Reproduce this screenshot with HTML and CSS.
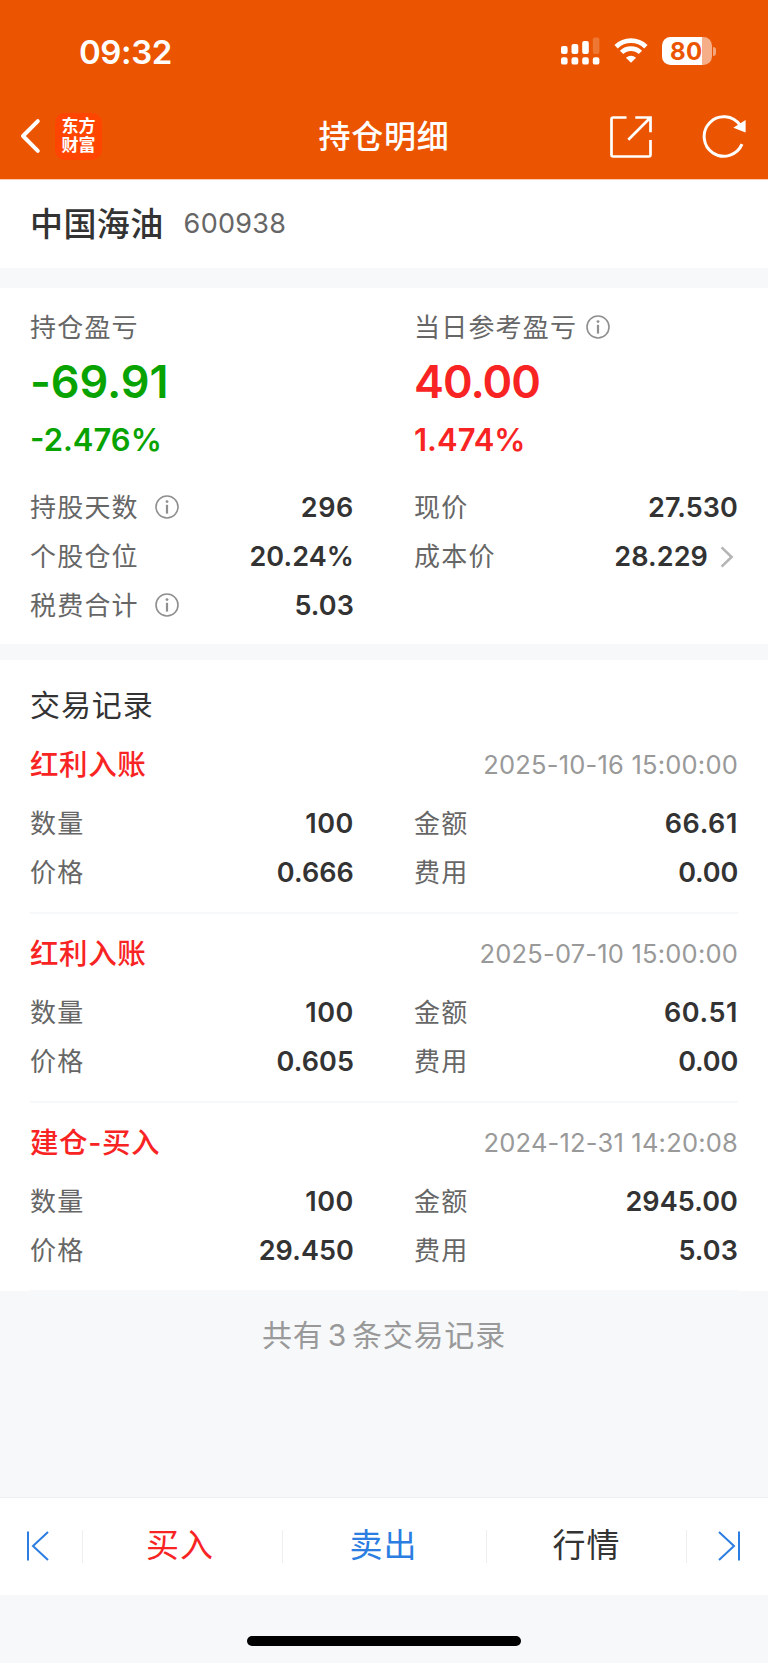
FILE: index.html
```
<!DOCTYPE html>
<html lang="zh-CN">
<head>
<meta charset="utf-8">
<title>持仓明细</title>
<link rel="stylesheet" href="styles.css">
</head>
<body>
<svg class="defs" width="0" height="0" aria-hidden="true">
  <symbol id="info" viewBox="0 0 24 24">
    <circle cx="12" cy="12" r="11" fill="none" stroke="#8f8f8f" stroke-width="1.6"/>
    <circle cx="12" cy="6.6" r="1.4" fill="#8f8f8f"/>
    <path d="M12 9.8V18.6" stroke="#8f8f8f" stroke-width="2.2"/>
  </symbol>
</svg>
<header class="header">
  <div class="status">
    <span class="time">09:32</span>
    <div class="indicators">
      <svg class="signal" width="39" height="28" viewBox="0 0 39 28" fill="#fff">
        <rect x="0" y="9" width="6.6" height="8" rx="2"/>
        <rect x="10.5" y="7" width="6.8" height="10" rx="2"/>
        <rect x="21.2" y="4" width="6.6" height="13" rx="2"/>
        <rect x="31.8" y="0.5" width="6.6" height="16.5" rx="2" opacity=".2"/>
        <rect x="0" y="20.2" width="6.6" height="7.4" rx="2.2"/>
        <rect x="10.5" y="20.2" width="6.8" height="7.4" rx="2.2"/>
        <rect x="21.2" y="20.2" width="6.6" height="7.4" rx="2.2"/>
        <rect x="31.8" y="20.2" width="6.6" height="7.4" rx="2.2"/>
      </svg>
      <svg class="wifi" width="34" height="26" viewBox="0 0 34 26" fill="none" stroke="#fff" stroke-width="4.8">
        <path d="M2.1 8.7A21.5 21.5 0 0 1 31.9 8.7"/>
        <path d="M7.6 14.4A13.5 13.5 0 0 1 26.4 14.4"/>
        <path d="M17 24.8L11.9 19.7Q17 15.6 22.1 19.7Z" fill="#fff" stroke="none"/>
      </svg>
      <div class="battery"><span class="level">80</span></div>
      <span class="nub"></span>
    </div>
  </div>
  <nav class="nav">
    <div class="side">
      <svg class="back" width="22" height="36" viewBox="0 0 22 36" fill="none" stroke="#fff" stroke-width="4" stroke-linecap="round" stroke-linejoin="round"><path d="M18.8 3.2L4 18L18.8 32.8"/></svg>
      <div class="logo"><span>东方</span><span>财富</span></div>
    </div>
    <h1 class="title">持仓明细</h1>
    <div class="side side-end">
      <svg class="share" width="42" height="42" viewBox="0 0 42 42" fill="none" stroke="#fff" stroke-width="2.7">
        <path d="M16.5 1.5H3.2Q1.5 1.5 1.5 3.2V38.8Q1.5 40.5 3.2 40.5H38.8Q40.5 40.5 40.5 38.8V24"/>
        <path d="M25.3 1.5H40.5V16.3M40 2L18.3 23.8"/>
      </svg>
      <svg class="refresh" width="44" height="44" viewBox="0 0 44 44" fill="none" stroke="#fff" stroke-width="3">
        <path d="M40 30.2A19.7 19.7 0 1 1 38 11.2"/>
        <path d="M43.6 6V18.6L31.3 13.8Z" fill="#fff" stroke="none"/>
      </svg>
    </div>
  </nav>
</header>

<section class="stock"><span class="stock-name">中国海油</span><span class="stock-code">600938</span></section>

<section class="summary">
  <div class="cols">
    <div class="pnl down">
      <div class="label">持仓盈亏</div>
      <div class="amount">-69.91</div>
      <div class="percent">-2.476%</div>
    </div>
    <div class="pnl up">
      <div class="label">当日参考盈亏<svg class="info near"><use href="#info"/></svg></div>
      <div class="amount tight">40.00</div>
      <div class="percent">1.474%</div>
    </div>
  </div>
  <div class="cols facts">
    <div class="row"><span class="label">持股天数<svg class="info"><use href="#info"/></svg></span><b class="loose">296</b></div>
    <div class="row"><span class="label">现价</span><b>27.530</b></div>
    <div class="row"><span class="label">个股仓位</span><b>20.24%</b></div>
    <div class="row"><span class="label">成本价</span><b>28.229<svg class="more" width="14" height="22" viewBox="0 0 14 22" fill="none" stroke="#b5b5b5" stroke-width="2.6"><path d="M1.6 1.4L11.6 11L1.6 20.6"/></svg></b></div>
    <div class="row"><span class="label">税费合计<svg class="info"><use href="#info"/></svg></span><b>5.03</b></div>
  </div>
</section>

<section class="records">
  <h2 class="records-title">交易记录</h2>
  <article class="record">
    <div class="record-head"><span class="kind">红利入账</span><time>2025-10-16 15:00:00</time></div>
    <div class="cols">
      <div class="row"><span class="label">数量</span><b class="loose">100</b></div>
      <div class="row"><span class="label">金额</span><b class="loose">66.61</b></div>
      <div class="row"><span class="label">价格</span><b>0.666</b></div>
      <div class="row"><span class="label">费用</span><b class="snug">0.00</b></div>
    </div>
  </article>
  <article class="record">
    <div class="record-head"><span class="kind">红利入账</span><time>2025-07-10 15:00:00</time></div>
    <div class="cols">
      <div class="row"><span class="label">数量</span><b class="loose">100</b></div>
      <div class="row"><span class="label">金额</span><b class="loose">60.51</b></div>
      <div class="row"><span class="label">价格</span><b>0.605</b></div>
      <div class="row"><span class="label">费用</span><b class="snug">0.00</b></div>
    </div>
  </article>
  <article class="record">
    <div class="record-head"><span class="kind">建仓-买入</span><time>2024-12-31 14:20:08</time></div>
    <div class="cols">
      <div class="row"><span class="label">数量</span><b class="loose">100</b></div>
      <div class="row"><span class="label">金额</span><b>2945.00</b></div>
      <div class="row"><span class="label">价格</span><b>29.450</b></div>
      <div class="row"><span class="label">费用</span><b>5.03</b></div>
    </div>
  </article>
</section>

<p class="total">共有<span class="count">3</span>条交易记录</p>

<footer class="actions">
  <div class="action edge"><svg width="24" height="32" viewBox="0 0 24 32" fill="none" stroke="#2b7de1" stroke-width="2"><path d="M2 1.5V30.5M22 2L7 16L22 30"/></svg></div>
  <div class="action buy"><span>买入</span></div>
  <div class="action sell"><span>卖出</span></div>
  <div class="action"><span>行情</span></div>
  <div class="action edge"><svg width="24" height="32" viewBox="0 0 24 32" fill="none" stroke="#2b7de1" stroke-width="2"><path d="M22 1.5V30.5M2 2L17 16L2 30"/></svg></div>
</footer>
<div class="home"><span></span></div>
</body>
</html>
```
FILE: styles.css
```
* { box-sizing: border-box; }
body {
  margin: 0;
  width: 768px;
  height: 1663px;
  display: flex;
  flex-direction: column;
  overflow: hidden;
  background: #f6f8fa;
  color: #333;
  font-family: Inter, "Noto Sans CJK SC", sans-serif;
}
h1, h2, p { margin: 0; font-weight: 400; }
svg { display: block; flex: none; }
.defs { position: absolute; }

.header {
  height: 180px;
  background: #eb5502;
  border-bottom: 1px solid #f9c8ab;
  color: #fff;
}
.status {
  height: 102px;
  padding: 0 52px 0 79px;
  display: flex;
  align-items: center;
  justify-content: space-between;
}
.time { font-size: 33px; font-weight: 600; letter-spacing: -.4px; line-height: 40px; padding-top: 1px; }
.indicators { display: flex; align-items: center; }
.wifi { margin: 0 14px; }
.battery {
  width: 50px;
  height: 28px;
  border-radius: 8.5px;
  background: linear-gradient(to right, #fff 40px, #f6ae88 40px);
  display: flex;
  align-items: center;
  padding-left: 8px;
}
.level { font-size: 24px; font-weight: 700; letter-spacing: .3px; line-height: 26px; padding-top: 2px; color: #eb5502; }
.nub { width: 3px; height: 9px; margin-left: 1px; border-radius: 0 4px 4px 0; background: #f5a57c; }

.nav {
  height: 68px;
  display: flex;
  align-items: center;
  justify-content: space-between;
  padding: 0 22px 0 19px;
}
.side { width: 150px; display: flex; align-items: center; }
.side-end { width: 147px; justify-content: flex-end; }
.logo {
  width: 47px;
  height: 47px;
  margin-left: 14px;
  border-radius: 10px;
  background: #ff4500;
  display: flex;
  flex-direction: column;
  align-items: center;
  justify-content: center;
}
.logo span { font-size: 17px; font-weight: 700; line-height: 19.5px; }
.title { font-size: 32px; font-weight: 500; letter-spacing: .8px; line-height: 44px; padding-top: 2px; }
.share { margin-top: 1px; }
.refresh { margin-left: 50px; }

.stock {
  height: 88px;
  padding: 0 0 1px 30px;
  display: flex;
  align-items: center;
  background: #fff;
}
.stock-name { font-size: 33px; font-weight: 500; letter-spacing: .4px; line-height: 44px; }
.stock-code { margin-left: 20px; font-size: 27px; letter-spacing: .3px; line-height: 44px; color: #666; }

.cols { display: grid; grid-template-columns: 324px 324px; column-gap: 60px; }
.label {
  display: flex;
  align-items: center;
  font-size: 26px;
  letter-spacing: 1.2px;
  line-height: 49px;
  color: #666;
}
.info { width: 24px; height: 24px; margin: -1px 0 0 16px; }
.info.near { margin-left: 9px; }

.summary {
  height: 356px;
  margin-top: 20px;
  padding: 15px 30px 0;
  background: #fff;
}
.pnl .amount { font-size: 45px; font-weight: 600; letter-spacing: -.1px; line-height: 60px; }
.pnl .amount.tight { letter-spacing: -1px; }
.pnl .percent { font-size: 31px; font-weight: 600; line-height: 55px; }
.down .amount, .down .percent { color: #08a300; }
.up .amount, .up .percent { color: #f82424; }
.facts { margin-top: 16px; }
.row { height: 49px; display: flex; align-items: center; justify-content: space-between; }
.row b { display: flex; align-items: center; font-size: 27px; font-weight: 600; letter-spacing: .1px; line-height: 49px; }
.row b.loose { letter-spacing: .6px; }
.row b.snug { letter-spacing: -.2px; }
.more { margin: 0 4px 0 12px; }

.records { height: 631px; margin-top: 16px; padding: 23px 30px 0; background: #fff; }
.records-title { font-size: 30px; letter-spacing: .9px; line-height: 44px; }
.record { height: 189px; border-bottom: 2px solid #f7f8f9; padding-top: 21px; }
.records-title + .record { height: 187px; padding-top: 19px; }
.record-head { height: 38px; margin-bottom: 15px; display: flex; align-items: center; justify-content: space-between; }
.kind { font-size: 28.5px; font-weight: 500; letter-spacing: .6px; color: #f82424; line-height: 38px; }
.record time { font-size: 25.5px; letter-spacing: .2px; color: #999; line-height: 38px; }

.total { margin-top: 22px; text-align: center; font-size: 30px; letter-spacing: .8px; line-height: 44px; color: #999; }
.count { margin: 0 5px 0 4px; }

.actions {
  height: 98px;
  margin-top: auto;
  display: grid;
  grid-template-columns: 82px 200px 204px 200px 82px;
  align-items: center;
  background: #fff;
  border-top: 1px solid #eeeff0;
}
.action {
  height: 33px;
  display: flex;
  align-items: center;
  justify-content: center;
  font-size: 33px;
  letter-spacing: 1px;
}
.action span { line-height: 40px; padding-bottom: 4px; }
.action + .action { border-left: 1px solid #eee; }
.action svg { margin-bottom: 1px; }
.edge:first-child { padding-right: 6px; }
.edge:last-child { padding-left: 2px; }
.buy { color: #f82424; padding-right: 5px; }
.sell { color: #2b7de1; padding-right: 2px; }
.home { height: 68px; padding-top: 41px; }
.home span { display: block; width: 274px; height: 10px; margin: 0 auto; border-radius: 5px; background: #000; }
```
